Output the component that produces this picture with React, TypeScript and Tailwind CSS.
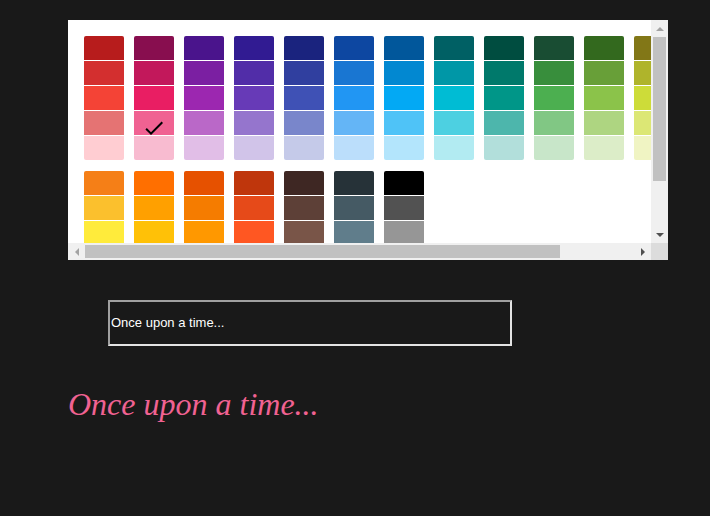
import React from "react";

const topGroup = [
  ["#b71c1c", "#d32f2f", "#f44336", "#e57373", "#ffcdd2"],
  ["#880e4f", "#c2185b", "#e91e63", "#f06292", "#f8bbd0"],
  ["#4a148c", "#7b1fa2", "#9c27b0", "#ba68c8", "#e1bee7"],
  ["#311b92", "#512da8", "#673ab7", "#9575cd", "#d1c4e9"],
  ["#1a237e", "#303f9f", "#3f51b5", "#7986cb", "#c5cae9"],
  ["#0d47a1", "#1976d2", "#2196f3", "#64b5f6", "#bbdefb"],
  ["#01579b", "#0288d1", "#03a9f4", "#4fc3f7", "#b3e5fc"],
  ["#006064", "#0097a7", "#00bcd4", "#4dd0e1", "#b2ebf2"],
  ["#004d40", "#00796b", "#009688", "#4db6ac", "#b2dfdb"],
  ["#194d33", "#388e3c", "#4caf50", "#81c784", "#c8e6c9"],
  ["#33691e", "#689f38", "#8bc34a", "#aed581", "#dcedc8"],
  ["#827717", "#afb42b", "#cddc39", "#dce775", "#f0f4c3"],
];

const bottomGroup = [
  ["#f57f17", "#fbc02d", "#ffeb3b", "#fff176", "#fff9c4"],
  ["#ff6f00", "#ffa000", "#ffc107", "#ffd54f", "#ffecb3"],
  ["#e65100", "#f57c00", "#ff9800", "#ffb74d", "#ffe0b2"],
  ["#bf360c", "#e64a19", "#ff5722", "#ff8a65", "#ffccbc"],
  ["#3e2723", "#5d4037", "#795548", "#a1887f", "#d7ccc8"],
  ["#263238", "#455a64", "#607d8b", "#90a4ae", "#cfd8dc"],
  ["#000000", "#525252", "#969696", "#d9d9d9", "#ffffff"],
];

const selected = "#f06292";

function Check() {
  return (
    <svg width="24" height="24" viewBox="0 0 24 24" className="absolute left-[8px] top-[5px]">
      <path d="M9 16.17L4.83 12l-1.42 1.41L9 19 21 7l-1.41-1.41z" fill="#000" />
    </svg>
  );
}

function Group({ cols }: { cols: string[][] }) {
  return (
    <div className="flex gap-[10px]">
      {cols.map((col, i) => (
        <div key={i} className="flex flex-col gap-px w-[40px] shrink-0 rounded-[2px] overflow-hidden">
          {col.map((c) => (
            <div key={c} className="relative h-[24px]" style={{ background: c }}>
              {c === selected && <Check />}
            </div>
          ))}
        </div>
      ))}
    </div>
  );
}

function Arrow({ dir, color }: { dir: "up" | "down" | "left" | "right"; color: string }) {
  const pts = {
    up: "0,4 4,0 8,4",
    down: "0,0 8,0 4,4",
    left: "4,0 4,8 0,4",
    right: "0,0 4,4 0,8",
  }[dir];
  const vertical = dir === "up" || dir === "down";
  return (
    <svg width={vertical ? 8 : 4} height={vertical ? 4 : 8} viewBox={vertical ? "0 0 8 4" : "0 0 4 8"}>
      <polygon points={pts} fill={color} />
    </svg>
  );
}

export default function App() {
  return (
    <div className="min-h-[516px] bg-[#191919] pt-[20px] font-['Liberation_Sans',Arial,sans-serif]">
      <div className="ml-[68px] w-[600px] h-[240px] bg-white flex flex-col">
        <div className="flex flex-1 min-h-0">
          <div className="flex-1 overflow-hidden p-4 flex flex-col gap-[11px]">
            <Group cols={topGroup} />
            <Group cols={bottomGroup} />
          </div>
          <div className="w-[17px] bg-[#f0f0f0] flex flex-col items-center">
            <div className="h-[17px] flex items-center justify-center">
              <Arrow dir="up" color="#a3a3a3" />
            </div>
            <div className="w-[13px] h-[144px] bg-[#c1c1c1]" />
            <div className="flex-1" />
            <div className="h-[17px] flex items-center justify-center">
              <Arrow dir="down" color="#505050" />
            </div>
          </div>
        </div>
        <div className="h-[17px] flex">
          <div className="flex-1 bg-[#f0f0f0] flex items-center">
            <div className="w-[17px] h-full flex items-center justify-center">
              <Arrow dir="left" color="#a3a3a3" />
            </div>
            <div className="w-[475px] h-[13px] bg-[#c1c1c1]" />
            <div className="flex-1" />
            <div className="w-[17px] h-full flex items-center justify-center">
              <Arrow dir="right" color="#505050" />
            </div>
          </div>
          <div className="w-[17px] bg-[#dcdcdc]" />
        </div>
      </div>

      <div className="ml-[108px] mt-[40px] w-[404px] h-[46px] border-2 border-t-[#a0a0a0] border-l-[#a0a0a0] border-b-[#e3e3e3] border-r-[#e3e3e3] flex items-center">
        <input
          readOnly
          defaultValue="Once upon a time..."
          className="w-full bg-transparent outline-none text-white text-[13px] pl-px font-['Liberation_Sans',Arial,sans-serif]"
        />
      </div>

      <p className="ml-[68px] mt-[38px] text-[32px] leading-[40px] italic text-[#f06292] font-['Liberation_Serif','Times_New_Roman',serif]">
        Once upon a time...
      </p>
    </div>
  );
}
